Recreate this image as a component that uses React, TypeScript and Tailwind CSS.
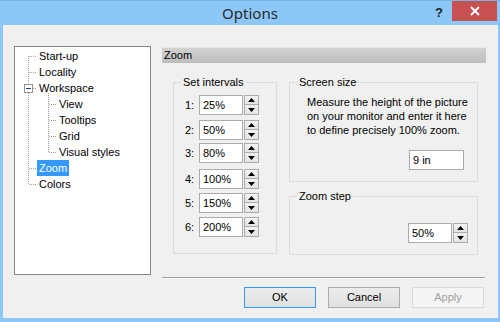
import React from "react";

const font = { fontFamily: '"Liberation Sans", Arial, sans-serif' };

function Spin() {
  return (
    <div className="ml-[1px] flex h-[20px] w-[15px] flex-col">
      <div className="flex h-[10px] items-center justify-center border border-[#acacac] bg-gradient-to-b from-[#f2f2f2] to-[#e4e4e4]">
        <svg width="7" height="4" viewBox="0 0 7 4">
          <path d="M3.5 0 L7 4 L0 4 Z" fill="#000" />
        </svg>
      </div>
      <div className="flex h-[10px] items-center justify-center border border-t-0 border-[#acacac] bg-gradient-to-b from-[#f2f2f2] to-[#e4e4e4]">
        <svg width="7" height="4" viewBox="0 0 7 4">
          <path d="M0 0 L7 0 L3.5 4 Z" fill="#000" />
        </svg>
      </div>
    </div>
  );
}

function Field({ value, w = "w-[44px]" }: { value: string; w?: string }) {
  return (
    <div className={`flex h-[20px] ${w} items-center border border-[#ababab] bg-white pl-[3px] text-[11px] text-black`}>
      {value}
    </div>
  );
}

function Group({ label, className, children }: { label: string; className: string; children?: React.ReactNode }) {
  return (
    <div className={`relative border border-[#dcdcdc] ${className}`}>
      <span className="absolute left-[7px] top-[-8px] bg-[#f0f0f0] px-[2px] text-[11px] leading-[14px] text-black">
        {label}
      </span>
      {children}
    </div>
  );
}

const intervals = [
  { n: "1:", v: "25%", mt: "mt-[12px]" },
  { n: "2:", v: "50%", mt: "mt-[5px]" },
  { n: "3:", v: "80%", mt: "mt-[3px]" },
  { n: "4:", v: "100%", mt: "mt-[6px]" },
  { n: "5:", v: "150%", mt: "mt-[4px]" },
  { n: "6:", v: "200%", mt: "mt-[4px]" },
];

const tree = [
  { label: "Start-up", child: false },
  { label: "Locality", child: false },
  { label: "Workspace", child: false },
  { label: "View", child: true },
  { label: "Tooltips", child: true },
  { label: "Grid", child: true },
  { label: "Visual styles", child: true },
  { label: "Zoom", child: false, sel: true },
  { label: "Colors", child: false },
];

function Tree() {
  const rows = tree.map((_, i) => i * 16 + 9.5);
  return (
    <div className="relative h-[229px] w-[137px] border border-[#828790] bg-white pt-[1px]">
      <svg className="absolute inset-0" width="135" height="227">
        <g stroke="#a0a0a0" strokeDasharray="1 1" fill="none">
          <line x1="13.5" y1="9" x2="13.5" y2="37" />
          <line x1="13.5" y1="46" x2="13.5" y2="138" />
          <line x1="33.5" y1="46" x2="33.5" y2="106" />
          {rows.map((y, i) =>
            tree[i].child ? (
              <line key={i} x1="34" y1={y} x2="42" y2={y} />
            ) : (
              <line key={i} x1={i === 2 ? 18 : 14} y1={y} x2="22" y2={y} />
            )
          )}
        </g>
        <rect x="9.5" y="37.5" width="8" height="8" fill="#fff" stroke="#919191" />
        <line x1="11" y1="41.5" x2="16" y2="41.5" stroke="#1d3f8f" />
      </svg>
      <div className="relative flex flex-col">
        {tree.map((t) => (
          <div key={t.label} className={`flex h-[16px] items-center ${t.child ? "pl-[42px]" : "pl-[22px]"}`}>
            <span
              className={`px-[2px] text-[11px] leading-[16px] ${t.sel ? "bg-[#3399ff] text-white" : "text-black"}`}
            >
              {t.label}
            </span>
          </div>
        ))}
      </div>
    </div>
  );
}

export default function App() {
  return (
    <div className="flex h-[322px] w-[500px] flex-col bg-[#8cc7f7]" style={font}>
      {/* title bar */}
      <div className="relative flex h-[25px] items-center justify-center border-t border-[#78b3e6]">
        <span className="text-[15px] text-[#2b2b2b]" style={{ fontFamily: '"Noto Sans", sans-serif' }}>
          Options
        </span>
        <span className="absolute left-[435px] top-[2px] text-[13px] font-bold text-[#222]">?</span>
        <div className="absolute left-[452px] top-0 flex h-[20px] w-[45px] items-center justify-center bg-[#c75050]">
          <svg width="10" height="10" viewBox="0 0 10 10">
            <path d="M1 1 L9 9 M9 1 L1 9" stroke="#fff" strokeWidth="1.8" />
          </svg>
        </div>
      </div>

      {/* client area */}
      <div className="mb-[4px] ml-[3px] mr-[2px] flex flex-1 bg-[#f0f0f0] pl-[11px] pt-[21px]">
        <Tree />

        <div className="ml-[11px] flex w-[324px] flex-col pt-[1px]">
          <div className="flex h-[16px] items-center border-t border-[#e6e6e6] bg-gradient-to-b from-[#d2d2d2] to-[#bdbdbd] pl-[2px] text-[11px] text-black">
            Zoom
          </div>

          <div className="mt-[19px] flex pl-[11px]">
            <Group label="Set intervals" className="h-[172px] w-[104px]">
              <div className="flex flex-col">
                {intervals.map((r) => (
                  <div key={r.n} className={`flex items-center ${r.mt}`}>
                    <span className="w-[25px] pl-[11px] text-[11px] text-black">{r.n}</span>
                    <Field value={r.v} />
                    <Spin />
                  </div>
                ))}
              </div>
            </Group>

            <div className="ml-[12px] flex flex-col">
              <Group label="Screen size" className="h-[100px] w-[189px]">
                <p className="mt-[12px] whitespace-nowrap pl-[17px] text-[11px] leading-[14px] text-black">
                  Measure the height of the picture
                  <br />
                  on your monitor and enter it here
                  <br />
                  to define precisely 100% zoom.
                </p>
                <div className="mt-[13px] flex justify-end pr-[13px]">
                  <Field value="9 in" w="w-[55px]" />
                </div>
              </Group>

              <Group label="Zoom step" className="mt-[14px] h-[59px] w-[189px]">
                <div className="mt-[26px] flex justify-end pr-[9px]">
                  <Field value="50%" />
                  <Spin />
                </div>
              </Group>
            </div>
          </div>

          <div className="mt-[22px] h-[2px] w-[323px] border-t border-b border-t-[#a0a0a0] border-b-white" />

          <div className="mt-[8px] flex justify-end gap-[12px] pr-[2px]">
            <button className="h-[21px] w-[72px] border border-[#3399ff] bg-gradient-to-b from-[#ececec] to-[#e0e0e0] text-[11px] text-black">
              OK
            </button>
            <button className="h-[21px] w-[72px] border border-[#acacac] bg-gradient-to-b from-[#ececec] to-[#e0e0e0] text-[11px] text-black">
              Cancel
            </button>
            <button className="h-[21px] w-[72px] border border-[#d9d9d9] bg-[#f4f4f4] text-[11px] text-[#a0a0a0]">
              Apply
            </button>
          </div>
        </div>
      </div>
    </div>
  );
}
